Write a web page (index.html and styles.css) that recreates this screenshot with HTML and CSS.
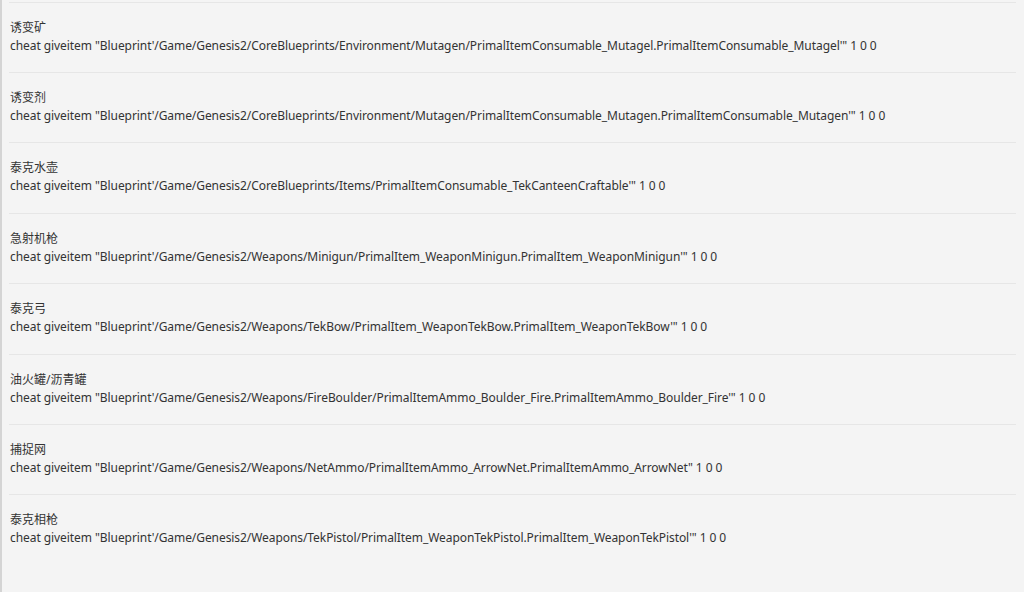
FILE: index.html
```html
<!DOCTYPE html>
<html lang="zh-CN">
<head>
  <meta charset="UTF-8" />
  <meta name="viewport" content="width=device-width, initial-scale=1.0" />
  <title>Genesis2 物品代码</title>
  <link rel="stylesheet" href="styles.css">
</head>
<body>
  <div class="page">
    <ul class="code-list">
      <li class="code-item">
        <div class="item-name">诱变矿</div>
        <div class="item-cmd">cheat giveitem "Blueprint'/Game/Genesis2/CoreBlueprints/Environment/Mutagen/PrimalItemConsumable_Mutagel.PrimalItemConsumable_Mutagel'" 1 0 0</div>
      </li>
      <li class="code-item">
        <div class="item-name">诱变剂</div>
        <div class="item-cmd">cheat giveitem "Blueprint'/Game/Genesis2/CoreBlueprints/Environment/Mutagen/PrimalItemConsumable_Mutagen.PrimalItemConsumable_Mutagen'" 1 0 0</div>
      </li>
      <li class="code-item">
        <div class="item-name">泰克水壶</div>
        <div class="item-cmd">cheat giveitem "Blueprint'/Game/Genesis2/CoreBlueprints/Items/PrimalItemConsumable_TekCanteenCraftable'" 1 0 0</div>
      </li>
      <li class="code-item">
        <div class="item-name">急射机枪</div>
        <div class="item-cmd">cheat giveitem "Blueprint'/Game/Genesis2/Weapons/Minigun/PrimalItem_WeaponMinigun.PrimalItem_WeaponMinigun'" 1 0 0</div>
      </li>
      <li class="code-item">
        <div class="item-name">泰克弓</div>
        <div class="item-cmd">cheat giveitem "Blueprint'/Game/Genesis2/Weapons/TekBow/PrimalItem_WeaponTekBow.PrimalItem_WeaponTekBow'" 1 0 0</div>
      </li>
      <li class="code-item">
        <div class="item-name">油火罐/沥青罐</div>
        <div class="item-cmd">cheat giveitem "Blueprint'/Game/Genesis2/Weapons/FireBoulder/PrimalItemAmmo_Boulder_Fire.PrimalItemAmmo_Boulder_Fire'" 1 0 0</div>
      </li>
      <li class="code-item">
        <div class="item-name">捕捉网</div>
        <div class="item-cmd">cheat giveitem "Blueprint'/Game/Genesis2/Weapons/NetAmmo/PrimalItemAmmo_ArrowNet.PrimalItemAmmo_ArrowNet" 1 0 0</div>
      </li>
      <li class="code-item">
        <div class="item-name">泰克相枪</div>
        <div class="item-cmd">cheat giveitem "Blueprint'/Game/Genesis2/Weapons/TekPistol/PrimalItem_WeaponTekPistol.PrimalItem_WeaponTekPistol'" 1 0 0</div>
      </li>
    </ul>
  </div>
</body>
</html>
```

FILE: styles.css
```css
html, body {
  margin: 0;
  height: 100%;
  background: #f4f4f4;
}

body {
  font-family: "Noto Sans", "Noto Sans CJK SC", sans-serif;
  font-size: 12px;
  color: #333;
}

.page {
  height: 100%;
  border-left: 2px solid #d4d4d4;
  padding: 1.5px 8px 0 7px;
  box-sizing: border-box;
}

.code-list {
  list-style: none;
  margin: 0;
  padding: 0;
}

.code-item {
  border-top: 1px solid #e6e6e6;
  padding: 16px 0 17.43px 1px;
  line-height: 18px;
}

.item-cmd {
  white-space: nowrap;
  letter-spacing: -0.07px;
}
```
